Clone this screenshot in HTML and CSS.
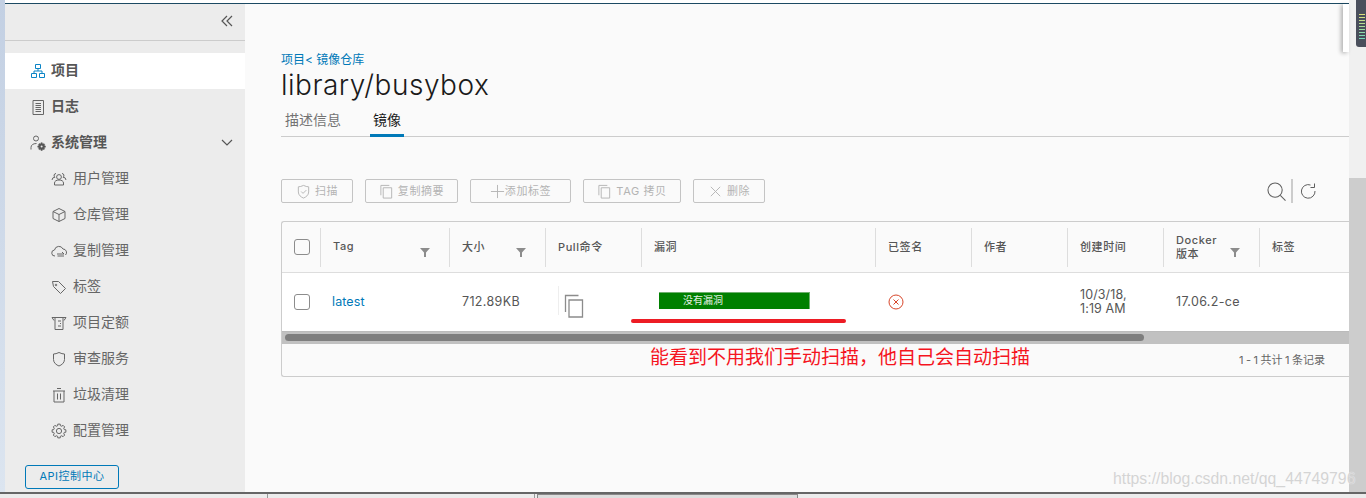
FILE: index.html
```html
<!DOCTYPE html>
<html lang="zh">
<head>
<meta charset="utf-8">
<title>library/busybox</title>
<link rel="stylesheet" href="styles.css">
</head>
<body>
<div class="topline"></div>
<div class="app">
  <div class="edge"></div>
  <aside class="sidebar">
    <div class="collapse">
      <svg class="ic-collapse" viewBox="0 0 12 12"><path d="M6 1 1 6l5 5M11 1 6 6l5 5"/></svg>
    </div>
    <nav class="nav">
      <a class="item top active"><svg viewBox="0 0 16 16" class="ic"><path d="M5.500 1.500h5v4h-5zM1.500 10.500h5v4h-5zM9.500 10.500h5v4h-5zM8 5.500V8M4 10.500V8h8v2.500"/></svg><span>项目</span></a>
      <a class="item top"><svg viewBox="0 0 16 16" class="ic"><path d="M3 1.500h10.500v14H3zM5.500 4.500h5.500M5.500 6.500h5.500M5.500 8.500h5.500M5.500 10.500h5.500M5.500 12.500h5.500"/></svg><span>日志</span></a>
      <a class="item top"><svg viewBox="0 0 16 16" class="ic"><circle cx="6" cy="3.500" r="2.500"/><path d="M1 14.500v-2C1 10 3 8.500 6.500 8.500"/><path class="gear" transform="translate(7.200 7.200) scale(.55)" d="M6.780 1.110H9.220L9.330 2.660L10.830 3.290L12.020 2.270L13.730 3.980L12.710 5.170L13.340 6.670L14.890 6.780V9.220L13.340 9.330L12.710 10.830L13.730 12.020L12.020 13.730L10.830 12.710L9.330 13.340L9.220 14.890H6.780L6.670 13.340L5.170 12.710L3.980 13.730L2.270 12.020L3.290 10.830L2.660 9.330L1.110 9.220V6.780L2.660 6.670L3.290 5.170L2.270 3.980L3.980 2.270L5.170 3.290L6.670 2.660Z"/><circle class="gear-hole" cx="11.600" cy="11.600" r="1"/></svg><span>系统管理</span><svg class="chev" viewBox="0 0 12 8"><path d="M1 1l5 5 5-5"/></svg></a>
      <a class="item sub"><svg viewBox="0 0 16 16" class="ic"><circle cx="8" cy="6" r="2.400"/><path d="M3.500 14v-2c0-2 2-3 4.500-3s4.500 1 4.500 3v2zM5 2.500a2 2 0 0 0-1 3.700 3 3 0 0 0-3 2.800M11 2.500a2 2 0 0 1 1 3.700 3 3 0 0 1 3 2.800"/></svg><span>用户管理</span></a>
      <a class="item sub"><svg viewBox="0 0 16 16" class="ic"><path d="M8 1.500 14 4.500v7L8 14.500 2 11.500v-7zM2 4.500 8 7.500l6-3M8 7.500v7"/></svg><span>仓库管理</span></a>
      <a class="item sub"><svg viewBox="0 0 16 16" class="ic"><path d="M4 13a3 3 0 0 1-.500-6A4.500 4.500 0 0 1 12 6a3.500 3.500 0 0 1 2.500 6M6 11h7l-2-2M13 13H6.500"/></svg><span>复制管理</span></a>
      <a class="item sub"><svg viewBox="0 0 16 16" class="ic"><path d="M1.500 2.500h6l7 7-5 5-7-7z"/><circle cx="5" cy="6" r=".8"/></svg><span>标签</span></a>
      <a class="item sub"><svg viewBox="0 0 16 16" class="ic"><path d="M1 2.500h14M1 2.500l2 3M15 2.500l-2 3M4 3v11.500h8V3M7 6h3M9 8.500h1M7 11h3"/></svg><span>项目定额</span></a>
      <a class="item sub"><svg viewBox="0 0 16 16" class="ic"><path d="M8 1.500c2 1 4 1.500 5.500 1.500v5.500c0 3.500-3 5.500-5.500 6.500-2.500-1-5.500-3-5.500-6.500V3C4 3 6 2.500 8 1.500z"/></svg><span>审查服务</span></a>
      <a class="item sub"><svg viewBox="0 0 16 16" class="ic"><path d="M2 4h12M3 4v11h10V4M6 1.500h4M6.500 6.500v6M9.500 6.500v6"/></svg><span>垃圾清理</span></a>
      <a class="item sub"><svg viewBox="0 0 16 16" class="ic"><circle cx="8" cy="8" r="2.600"/><path d="M6.780 1.110H9.220L9.330 2.660L10.830 3.290L12.020 2.270L13.730 3.980L12.710 5.170L13.340 6.670L14.890 6.780V9.220L13.340 9.330L12.710 10.830L13.730 12.020L12.020 13.730L10.830 12.710L9.330 13.340L9.220 14.890H6.780L6.670 13.340L5.170 12.710L3.980 13.730L2.270 12.020L3.290 10.830L2.660 9.330L1.110 9.220V6.780L2.660 6.670L3.290 5.170L2.270 3.980L3.980 2.270L5.170 3.290L6.670 2.660Z"/></svg><span>配置管理</span></a>
    </nav>
    <button class="api">API控制中心</button>
  </aside>

  <main class="main">
    <a class="crumb">项目&lt; 镜像仓库</a>
    <h1 class="title">library/busybox</h1>
    <div class="tabs">
      <span class="tab">描述信息</span>
      <span class="tab on">镜像</span>
    </div>

    <div class="toolbar">
      <button class="btn b1"><svg viewBox="0 0 16 16"><path d="M8 1.500c2 1 4 1.500 5.500 1.500v5.500c0 3.500-3 5.500-5.500 6.500-2.500-1-5.500-3-5.500-6.500V3C4 3 6 2.500 8 1.500zM5.500 8l2 2 3.500-3.500"/></svg>扫描</button>
      <button class="btn b2"><svg viewBox="0 0 16 16"><path d="M2 12V1.500h9M4.500 4h9v11h-9z"/></svg>复制摘要</button>
      <button class="btn b3"><svg viewBox="0 0 16 16"><path d="M8 1v14M1 8h14"/></svg>添加标签</button>
      <button class="btn b4"><svg viewBox="0 0 16 16"><path d="M2 12V1.500h9M4.500 4h9v11h-9z"/></svg>TAG 拷贝</button>
      <button class="btn b5"><svg viewBox="0 0 16 16"><path d="M3 3l10 10M13 3 3 13"/></svg>删除</button>
      <div class="tools">
        <svg class="t-search" viewBox="0 0 20 20"><circle cx="8.500" cy="8.500" r="7.500"/><path d="M14 14 19.500 19.500"/></svg>
        <span class="t-sep"></span>
        <svg class="t-refresh" viewBox="0 0 16 16"><path d="M10.500 2A6.800 6.800 0 1 0 15 8M14.500 0.500V4.500H10.500" /></svg>
      </div>
    </div>

    <section class="grid">
      <div class="head">
        <div class="cell chk"><span class="box"></span></div>
        <div class="cell">Tag<svg class="filter" viewBox="0 0 10 10"><path d="M0 1h10L6 5.500V10H4V5.500z"/></svg></div>
        <div class="cell">大小<svg class="filter" viewBox="0 0 10 10"><path d="M0 1h10L6 5.500V10H4V5.500z"/></svg></div>
        <div class="cell">Pull命令</div>
        <div class="cell">漏洞</div>
        <div class="cell">已签名</div>
        <div class="cell">作者</div>
        <div class="cell">创建时间</div>
        <div class="cell dock"><span>Docker<br>版本</span><svg class="filter" viewBox="0 0 10 10"><path d="M0 1h10L6 5.500V10H4V5.500z"/></svg></div>
        <div class="cell">标签</div>
      </div>
      <div class="row">
        <div class="cell chk"><span class="box"></span></div>
        <div class="cell link">latest</div>
        <div class="cell size">712.89KB</div>
        <div class="cell pull"><svg viewBox="0 0 20 24"><path d="M1.500 18V1.500h13M5 6h13.500v17H5z"/></svg></div>
        <div class="cell vuln"><span class="bar">没有漏洞</span></div>
        <div class="cell sign"><svg viewBox="0 0 16 16"><circle cx="8" cy="8" r="7"/><path d="M5.500 5.500l5 5M10.500 5.500l-5 5"/></svg></div>
        <div class="cell"></div>
        <div class="cell date">10/3/18,<br>1:19 AM</div>
        <div class="cell ver">17.06.2-ce</div>
        <div class="cell"></div>
      </div>
      <div class="hscroll"><div class="hthumb"></div></div>
      <div class="foot">1 - 1 共计 1 条记录</div>
    </section>
  </main>

  <div class="vscroll"><div class="vthumb"></div></div>
</div>
<div class="status">
  <span class="tick t1"></span><span class="tick t2"></span><span class="stab"></span>
</div>

<div class="redline"></div>
<div class="note">能看到不用我们手动扫描，他自己会自动扫描</div>
<div class="mark">https://blog.csdn.net/qq_44749796</div>
<div class="float"></div>
<div class="meter"><i></i></div>
</body>
</html>
```

FILE: styles.css
```css
* { box-sizing: border-box; }
html, body { margin: 0; height: 498px; overflow: hidden; }
body {
  position: relative;
  background: #f0f0f0;
  font-family: "Inter", "Noto Sans CJK SC", sans-serif;
  color: #565656;
}
.topline { height: 4px; background: #fff; border-bottom: 1px solid #1c4a63; margin-left: 5px; margin-right: 17px; }
.app { display: flex; height: 488px; }
.edge { width: 5px; margin-top: -4px; background: linear-gradient(#c3d0e3, #dce5f0); }
.sidebar { width: 240px; background: #ececec; display: flex; flex-direction: column; }
.collapse { height: 37px; border-bottom: 1px solid #ccc; display: flex; justify-content: flex-end; align-items: center; padding-right: 12px; flex: none; }
.ic-collapse { width: 12px; height: 12px; margin-top: -2px; fill: none; stroke: #565656; stroke-width: 1.200; }
.nav { padding-top: 12px; }
.item { display: flex; align-items: center; height: 36px; font-size: 14px; }
.item span { position: relative; top: -2px; }
.item .ic { width: 16px; height: 16px; fill: none; stroke: #666; stroke-width: 1; flex: none; }
.item.top { padding-left: 25px; font-weight: 700; color: #565656; }
.item.top .ic { margin-right: 5px; }
.item.sub { padding-left: 46px; color: #666; }
.item.sub .ic { margin-right: 6px; }
.item.active { background: #fff; }
.item.active .ic { stroke: #0a84c6; }
.item .gear { fill: #565656; stroke: #565656; stroke-width: 1; }
.item .gear-hole { fill: #ececec; stroke: none; }
.chev { width: 12px; height: 8px; margin-left: auto; margin-right: 12px; fill: none; stroke: #565656; stroke-width: 1.200; }
.api { width: 94px; height: 24px; margin: 16px 0 0 20px; padding: 0 0 2px; border: 1px solid #0079b8; border-radius: 3px; background: transparent; color: #0079b8; font: 11px/20px "Inter", "Noto Sans CJK SC", sans-serif; letter-spacing: .5px; }

.main { width: 1104px; background: #fafafa; padding: 0 0 0 36px; display: flex; flex-direction: column; }
.crumb { margin-top: 48px; height: 16px; font-size: 12px; line-height: 16px; color: #0079b8; }
.title { margin: -1px 0 0; height: 37px; font-size: 28px; line-height: 36px; font-weight: 300; color: #1a1a1a; letter-spacing: .5px; }
.tabs { display: flex; height: 33px; border-bottom: 1px solid #ccc; }
.tab { padding: 0 4px; margin-right: 22px; font-size: 14px; line-height: 31px; height: 33px; color: #737373; }
.tab.on { color: #1a1a1a; border-bottom: 3px solid #0079b8; margin-left: 3px; padding: 0 3px; width: 34px; }

.toolbar { display: flex; align-items: center; margin-top: 42px; height: 24px; }
.btn { display: flex; align-items: center; justify-content: center; height: 24px; padding: 0 0 2px; background: transparent; border: 1px solid #c4c4c4; border-radius: 2px; font: 11px "Inter", "Noto Sans CJK SC", sans-serif; color: #b4b4b4; letter-spacing: .6px; margin-right: 12px; }
.btn svg { width: 15px; height: 15px; margin-right: 4px; fill: none; stroke: #b4b4b4; stroke-width: 1; position: relative; top: 1px; }
.b1 { width: 72px; }
.b2 { width: 93px; }
.b3 { width: 101px; }
.b3 svg { margin-right: 0; }
.b4 { width: 98px; }
.b5 { width: 72px; }
.tools { display: flex; align-items: center; margin-left: 490px; }
.t-search { width: 19px; height: 19px; fill: none; stroke: #5e5e5e; stroke-width: 1.100; }
.t-sep { width: 2px; height: 24px; background: #ccc; margin: 0 7px 0 5px; }
.t-refresh { width: 16px; height: 16px; fill: none; stroke: #5e5e5e; stroke-width: 1; }

.grid { margin-top: 18px; height: 156px; border: 1px solid #ccc; border-right: none; border-radius: 3px 0 0 3px; display: flex; flex-direction: column; }
.head, .row { display: grid; grid-template-columns: 38px 129px 96px 96px 234px 96px 96px 96px 96px 90px; }
.head { height: 51px; border-bottom: 1px solid #ddd; font-size: 11px; font-weight: 500; letter-spacing: .6px; color: #565656; align-items: center; }
.head .cell { position: relative; height: 39px; display: flex; align-items: center; padding: 0 0 2px 12px; border-left: 1px solid #ddd; }
.head .chk { border-left: none; padding: 0 0 0 12px; }
.head .dock { padding-bottom: 0; }
.filter { position: absolute; right: 19px; top: 19px; width: 10px; height: 10px; fill: #8c8c8c; }
.dock span { line-height: 14px; }
.row { height: 58px; background: #fff; font-size: 12.500px; align-items: center; color: #565656; letter-spacing: .1px; }
.row .cell { padding-left: 12px; }
.box { display: block; width: 16px; height: 16px; border: 1px solid #8c8c8c; border-radius: 3px; background: #fff; }
.head .box { background: transparent; }
.row .link { color: #0079b8; padding-bottom: 2px; }
.row .size, .row .ver { padding-bottom: 2px; padding-left: 13px; letter-spacing: .35px; }
.row .pull { padding: 0; position: relative; height: 29px; margin-top: -3px; border-left: 1px solid #eee; left: 13px; }
.pull svg { display: block; position: relative; top: 8px; left: 5px; width: 20px; height: 24px; fill: none; stroke: #8c8c8c; stroke-width: 1.300; }
.row .vuln { padding-left: 18px; }
.bar { display: block; width: 151px; height: 17px; margin-top: -3px; background: #008000; border-top: 1px solid #6fb06f; border-right: 1px solid #6fb06f; color: #e6f2e6; font-size: 10px; line-height: 15px; letter-spacing: 0; padding-left: 24px; }
.row .sign { padding-left: 13px; }
.sign svg { display: block; width: 16px; height: 16px; fill: none; stroke: #d8462a; stroke-width: 1; }
.row .date { line-height: 14px; padding-left: 13px; }
.hscroll { height: 13px; background: #c1c1c1; border-top: 1px solid #bbb; padding: 2px 0 0 3px; flex: none; }
.hthumb { width: 859px; height: 7px; border-radius: 4px; background: #7e7e7e; }
.foot { flex: 1; text-align: right; padding: 7px 24px 0 0; font-size: 11px; color: #666; word-spacing: -.6px; }

.vscroll { width: 17px; background: #f0f0f0; padding-top: 174px; }
.vthumb { height: 314px; background: #cdcdcd; }
.status { height: 6px; background: #ececec; border-top: 2px solid #666; position: relative; }
.tick { position: absolute; top: 0; width: 1px; height: 4px; background: #999; }
.t1 { left: 267px; }
.t2 { left: 534px; }
.stab { position: absolute; left: 537px; top: 0; width: 261px; height: 4px; border: 1px solid #888; border-bottom: none; background: #ddd; }

.redline { position: absolute; left: 631px; top: 319px; width: 215px; height: 4px; border-radius: 2px; background: #ed1c24; }
.note { position: absolute; left: 650px; top: 343px; font: 19px/26px "Noto Sans CJK SC", sans-serif; color: #f5141e; white-space: nowrap; }
.mark { position: absolute; left: 1113px; top: 469px; font: 15.800px/20px "Liberation Sans", sans-serif; color: #d4d4d4; text-shadow: 0 0 1px rgba(255,255,255,.9); white-space: nowrap; }
.float { position: absolute; left: 1343px; top: 4px; width: 6px; height: 48px; background: #fff; box-shadow: -2px 1px 4px rgba(0,0,0,.3); }
.meter { position: absolute; left: 1356px; top: 0; width: 10px; height: 47px; background: #4a4f5c; border-radius: 0 0 0 3px; padding: 14px 1px 0 3px; }
.meter i { display: block; height: 26px; background: repeating-linear-gradient(transparent 0 1px, #4a4f5c 1px 3px), linear-gradient(#dfe07a, #a8dc9c 50%, #6fdcc0); }
```
